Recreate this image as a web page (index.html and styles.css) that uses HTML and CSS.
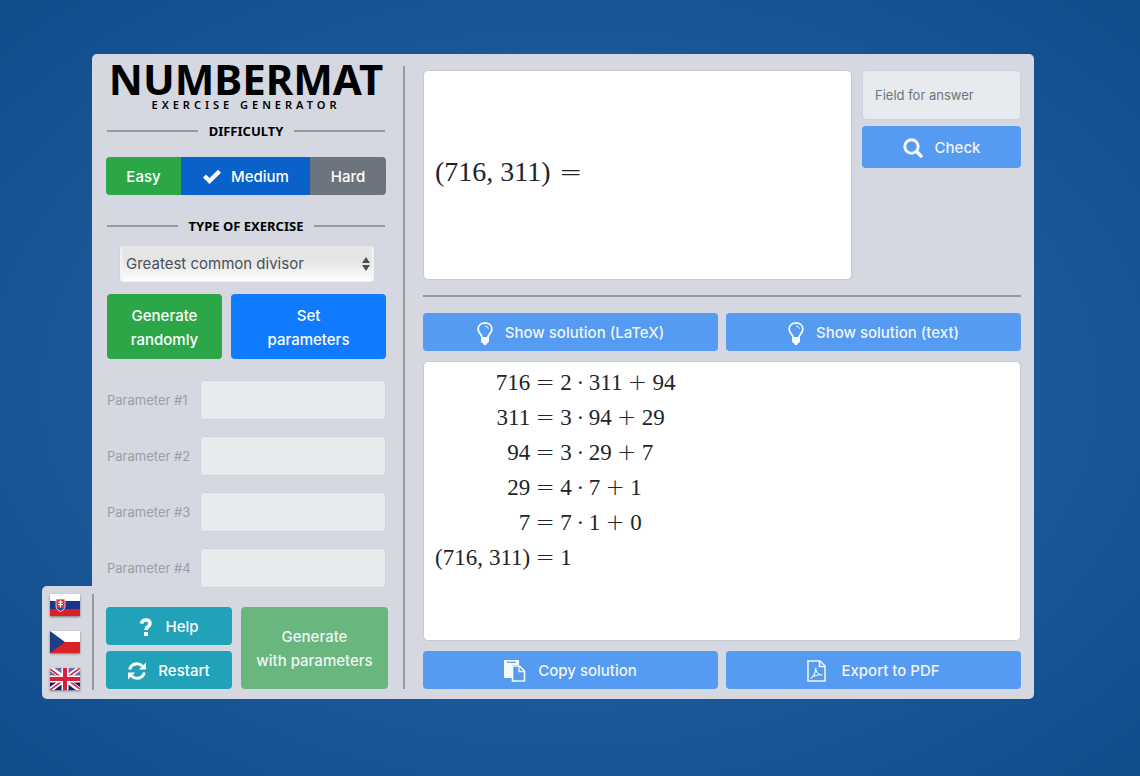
FILE: index.html
```html
<!DOCTYPE html>
<html lang="en">
<head>
<meta charset="utf-8">
<title>Numbermat</title>
<link rel="stylesheet" href="styles.css">
</head>
<body>
<div class="app">
  <nav class="languages" aria-label="Language">
    <div class="flags">
      <a href="#sk" aria-label="Slovak"><svg class="flag" viewBox="0 0 30 22"><path fill="#fff" d="M0 0h30v22H0z"/><path fill="#14368f" d="M0 7h30v8H0z"/><path fill="#dc2027" d="M0 15h30v7H0z"/><path fill="#e4343c" stroke="#fff" stroke-width=".7" d="M6 5h9v7q0 4-4.500 5.500Q6 16 6 12z"/><path fill="#244b9b" d="M7.500 14.500q3-3 6 0l-3 2.300z"/><path stroke="#fff" stroke-width="1.200" d="M10.500 6.500v7M8.500 8.200h4M8 10.500h5"/></svg></a>
      <a href="#cz" aria-label="Czech"><svg class="flag" viewBox="0 0 30 22"><path fill="#fff" d="M0 0h30v11H0z"/><path fill="#dc2027" d="M0 11h30v11H0z"/><path fill="#203e88" d="M0 0l15 11L0 22z"/></svg></a>
      <a href="#en" aria-label="English"><svg class="flag" viewBox="0 0 30 22"><path fill="#16196f" d="M0 0h30v22H0z"/><path fill="#6a6bab" d="M0 0h30v9H0z"/><path stroke="#fff" stroke-width="5" d="M0 0l30 22M30 0L0 22"/><path stroke="#dc2540" stroke-width="1.600" d="M0 1l12 9M30 0L17 9.500M0 22l12-9M30 21l-12-9"/><path stroke="#fff" stroke-width="7" d="M15 0v22M0 11h30"/><path stroke="#d8203a" stroke-width="4" d="M15 0v22M0 11h30"/></svg></a>
    </div>
    <div class="rule-v"></div>
  </nav>
  <main class="panel">
    <section class="sidebar">
      <h1 class="title">NUMBERMAT</h1>
      <p class="subtitle">EXERCISE GENERATOR</p>
      <h2 class="legend legend-first">DIFFICULTY</h2>
      <div class="levels">
        <button class="btn green">Easy</button>
        <button class="btn active"><svg class="icon check" viewBox="0 0 20 16"><path fill="#fff" d="M1 8.500L4 5.500 7.500 9 16 .8 19 3.800 7.500 15z"/></svg>Medium</button>
        <button class="btn gray">Hard</button>
      </div>
      <h2 class="legend legend-type">TYPE OF EXERCISE</h2>
      <div class="select-wrap">
        <select class="select" aria-label="Type of exercise"><option>Greatest common divisor</option></select>
        <svg class="arrows" viewBox="0 0 8 14"><path fill="#495057" d="M4 0l4 6H0zM4 14l4-6H0z"/></svg>
      </div>
      <div class="modes">
        <button class="btn green">Generate<br>randomly</button>
        <button class="btn blue">Set<br>parameters</button>
      </div>
      <div class="params">
        <label for="p1">Parameter #1</label><input id="p1" class="field" disabled>
        <label for="p2">Parameter #2</label><input id="p2" class="field" disabled>
        <label for="p3">Parameter #3</label><input id="p3" class="field" disabled>
        <label for="p4">Parameter #4</label><input id="p4" class="field" disabled>
      </div>
      <div class="actions">
        <button class="btn teal"><svg class="icon question" viewBox="0 0 14 18"><path fill="none" stroke="#fff" stroke-width="3.600" d="M2.300 5.600Q3.500 2 7 2q4 0 4 3.400 0 2-2 3.200-2 1.200-2 3.400"/><path fill="#fff" d="M5 14h4v4H5z"/></svg>Help</button>
        <button class="btn teal"><svg class="icon refresh" viewBox="0 0 18 18"><path fill="none" stroke="#fff" stroke-width="3" d="M1.700 7.500A7.400 7.400 0 0 1 14.300 4M16.300 10.500A7.400 7.400 0 0 1 3.700 14"/><path fill="#fff" d="M18 .5v7h-7zM0 17.500v-7h7z"/></svg>Restart</button>
        <button class="btn pale-green" disabled>Generate<br>with parameters</button>
      </div>
    </section>
    <div class="rule-v"></div>
    <section class="content">
      <div class="exercise">
        <div class="box question-box"><span class="math large"><span>(716,</span><span class="tail">311)</span><span class="op">=</span></span></div>
        <div class="answer">
          <input class="field" placeholder="Field for answer" aria-label="Field for answer" disabled>
          <button class="btn sky" disabled><svg class="icon search" viewBox="0 0 20 20"><circle cx="8.500" cy="8.500" r="6.700" fill="none" stroke="#f4f7fb" stroke-width="3"/><path stroke="#f4f7fb" stroke-width="3.600" stroke-linecap="round" d="M13.800 13.800l4.200 4.200"/></svg>Check</button>
        </div>
      </div>
      <div class="rule-h"></div>
      <div class="pair">
        <button class="btn sky" disabled><svg class="icon bulb" viewBox="0 0 16 23"><path fill="none" stroke="#f4f7fb" stroke-width="1.800" d="M5 15.500c0-3-3.900-4.500-3.900-8.500C1.100 3.400 4 1 8 1s6.900 2.400 6.900 6c0 4-3.900 5.500-3.900 8.500"/><path fill="none" stroke="#f4f7fb" d="M8 4q3 .2 3.500 2.800"/><path fill="#f4f7fb" d="M4 15h8v5l-2 1.500-1 1.500H7l-1-1.500L4 20z"/></svg>Show solution (LaTeX)</button>
        <button class="btn sky" disabled><svg class="icon bulb" viewBox="0 0 16 23"><path fill="none" stroke="#f4f7fb" stroke-width="1.800" d="M5 15.500c0-3-3.900-4.500-3.900-8.500C1.100 3.400 4 1 8 1s6.900 2.400 6.900 6c0 4-3.900 5.500-3.900 8.500"/><path fill="none" stroke="#f4f7fb" d="M8 4q3 .2 3.500 2.800"/><path fill="#f4f7fb" d="M4 15h8v5l-2 1.500-1 1.500H7l-1-1.500L4 20z"/></svg>Show solution (text)</button>
      </div>
      <div class="box solution math">
        <span class="lhs">716</span><span class="rhs"><span class="op">=</span>2<span class="dot">·</span>311<span class="op">+</span>94</span>
        <span class="lhs">311</span><span class="rhs"><span class="op">=</span>3<span class="dot">·</span>94<span class="op">+</span>29</span>
        <span class="lhs">94</span><span class="rhs"><span class="op">=</span>3<span class="dot">·</span>29<span class="op">+</span>7</span>
        <span class="lhs">29</span><span class="rhs"><span class="op">=</span>4<span class="dot">·</span>7<span class="op">+</span>1</span>
        <span class="lhs">7</span><span class="rhs"><span class="op">=</span>7<span class="dot">·</span>1<span class="op">+</span>0</span>
        <span class="lhs">(716,<span class="tail">311)</span></span><span class="rhs"><span class="op">=</span>1</span>
      </div>
      <div class="pair">
        <button class="btn sky" disabled><svg class="icon doc" viewBox="0 0 22 22"><path fill="#f4f7fb" d="M0 0h15v5H8v13H0z"/><path stroke="#559bf2" stroke-width="1.200" d="M3 2.300h9"/><path fill="#559bf2" stroke="#f4f7fb" stroke-width="1.600" d="M8.500 6h7l5 5V21h-12z"/><path fill="none" stroke="#f4f7fb" stroke-width="1.400" d="M15 6v5.500h5.500"/></svg>Copy solution</button>
        <button class="btn sky" disabled><svg class="icon doc" viewBox="0 0 22 22"><path fill="none" stroke="#f4f7fb" stroke-width="1.500" d="M1 1h12l5 5v15H1zM12.500 1v5.500H18"/><path fill="none" stroke="#f4f7fb" stroke-width="1.200" d="M3.500 18.500c3-1 5.500-6.500 5.200-11 0 4.500 2.300 7.500 6.800 7.500-3-.8-7 .5-9.500 1.500"/></svg>Export to PDF</button>
      </div>
    </section>
  </main>
</div>
</body>
</html>
```
FILE: styles.css
```css
* { box-sizing: border-box; }
body {
  margin: 0;
  min-height: 100vh;
  padding: 54px 106px 77px 42px;
  font: 16px/24px Inter, sans-serif;
  color: #212529;
  background: radial-gradient(ellipse, #2a69ae 0%, #0f4c8a 100%);
}
h1, h2, p { margin: 0; }
button, input, select { font: inherit; margin: 0; }
.app { display: flex; align-items: flex-end; }
.languages {
  position: relative;
  z-index: 1;
  display: flex;
  justify-content: space-between;
  width: 52px;
  margin-right: -2px;
  padding: 8px 0 9px 8px;
  background: #d5d8e0;
  border-radius: 5px 0 0 5px;
}
.flags { display: grid; gap: 15px; }
.flags a { display: block; height: 22px; }
.flag { display: block; width: 30px; height: 22px; box-shadow: 0 1px 2px #777; }
.rule-v { width: 2px; background: #999; }
.rule-h { height: 2px; margin: 15px 0 16px; background: #999; }
.panel {
  flex: 1;
  display: flex;
  padding: 0 13px 10px 14px;
  background: #d5d8e0;
  border-radius: 5px 5px 5px 0;
}
.panel > .rule-v { margin: 12px 18px 0 17px; }
.sidebar { width: 280px; padding-top: 5px; }
.title, .subtitle, .legend { font-family: "Noto Sans", sans-serif; color: #000; text-align: center; }
.title { font-size: 42px; line-height: 40px; font-weight: 700; white-space: nowrap; }
.subtitle { font-size: 11px; line-height: 12px; font-weight: 600; letter-spacing: 4px; }
.legend { display: flex; align-items: center; gap: 11px; font-size: 13px; line-height: 20px; font-weight: 700; }
.legend::before, .legend::after { content: ""; flex: 1; height: 2px; background: #999; }
.legend-first { margin: 10px 0 16px; }
.legend-type { margin: 21px 0 10px; }
.sidebar .legend { padding: 0 1px; }
.btn {
  display: flex;
  align-items: center;
  justify-content: center;
  padding: 7px 12px 5px;
  border: 0;
  border-radius: 4px;
  font-size: 15px;
  line-height: 24px;
  font-weight: 500;
  color: #fff;
  min-height: 38px;
  white-space: nowrap;
}
.green { background: #2ca748; }
.active { background: #0961c9; }
.gray { background: #6c747d; }
.blue { background: #107bff; }
.teal { background: #21a2b8; }
.pale-green { background: #69b77f; color: #f0f5f4; }
.sky { background: #559bf2; color: #f0f4fa; }
.icon { flex: none; margin-right: 12px; }
.check { width: 20px; height: 16px; margin-right: 9px; }
.question { width: 14px; height: 18px; }
.refresh { width: 18px; height: 18px; }
.search { width: 20px; height: 20px; }
.bulb { width: 16px; height: 23px; }
.doc { width: 22px; height: 22px; }
.levels { display: grid; grid-template-columns: 75fr 129fr 76fr; }
.levels .btn { border-radius: 0; }
.levels .btn:first-child { border-radius: 4px 0 0 4px; }
.levels .btn:last-child { border-radius: 0 4px 4px 0; }
.select-wrap { display: grid; align-items: center; margin: 0 11px 12px 13px; }
.select-wrap > * { grid-area: 1 / 1; }
.select {
  appearance: none;
  width: 100%;
  height: 36px;
  padding: 0 7px;
  border: 0;
  border-radius: 4px;
  font-size: 15px;
  color: #495057;
  background: linear-gradient(#e5e5e5 40%, #fff);
  box-shadow: inset 1px 0 1px #ccd0d8, inset -1px 0 1px #ccd0d8, inset 3px 0 2px #f6f6f6, inset -3px 0 2px #f6f6f6;
}
.arrows { width: 8px; height: 14px; justify-self: end; margin-right: 5px; pointer-events: none; }
.modes { display: grid; grid-template-columns: 115fr 155fr; gap: 9px; margin-left: 1px; }
.modes .btn { height: 65px; }
.params {
  display: grid;
  grid-template-columns: 1fr 186px;
  align-items: center;
  gap: 16px 0;
  margin: 21px 0 19px 1px;
  font-size: 13px;
  color: #9a9da4;
  white-space: nowrap;
}
.field {
  width: 100%;
  height: 40px;
  padding: 6px 12px;
  border: 1px solid #ced2d9;
  border-radius: 4px;
  background: #e8ebee;
  font-size: 13px;
}
.field::placeholder { color: #6c757d; opacity: 1; }
.actions { display: grid; grid-template-columns: 126fr 147fr; gap: 6px 9px; margin-right: -2px; }
.pale-green { grid-area: 1 / 2 / 3 / 3; }
.content { flex: 1; min-width: 0; padding-top: 16px; }
.exercise { display: grid; grid-template-columns: 1fr 159px; gap: 10px; }
.box { background: #fff; border: 1px solid #c8cacf; border-radius: 5px; }
.question-box { display: flex; align-items: center; min-height: 210px; padding: 0 11px 8px; }
.answer .field { height: 50px; margin-bottom: 6px; }
.answer .btn { width: 100%; height: 42px; }
.pair { display: grid; grid-template-columns: 1fr 1fr; gap: 8px; }
.math { font-family: "Liberation Serif", serif; font-size: 23px; line-height: 35px; color: #212529; }
.large { font-size: 28px; }
.tail { margin-left: 6px; }
.large .tail { margin-left: 7px; }
.op { display: inline-block; width: 30px; text-align: center; font-family: "DejaVu Sans", sans-serif; font-weight: 200; }
.large .op { width: 40px; }
.dot { display: inline-block; width: 17px; text-align: center; }
.solution {
  display: grid;
  grid-template-columns: max-content 1fr;
  align-content: start;
  min-height: 280px;
  margin: 10px 0;
  padding: 3px 11px;
}
.lhs { text-align: right; }
```
